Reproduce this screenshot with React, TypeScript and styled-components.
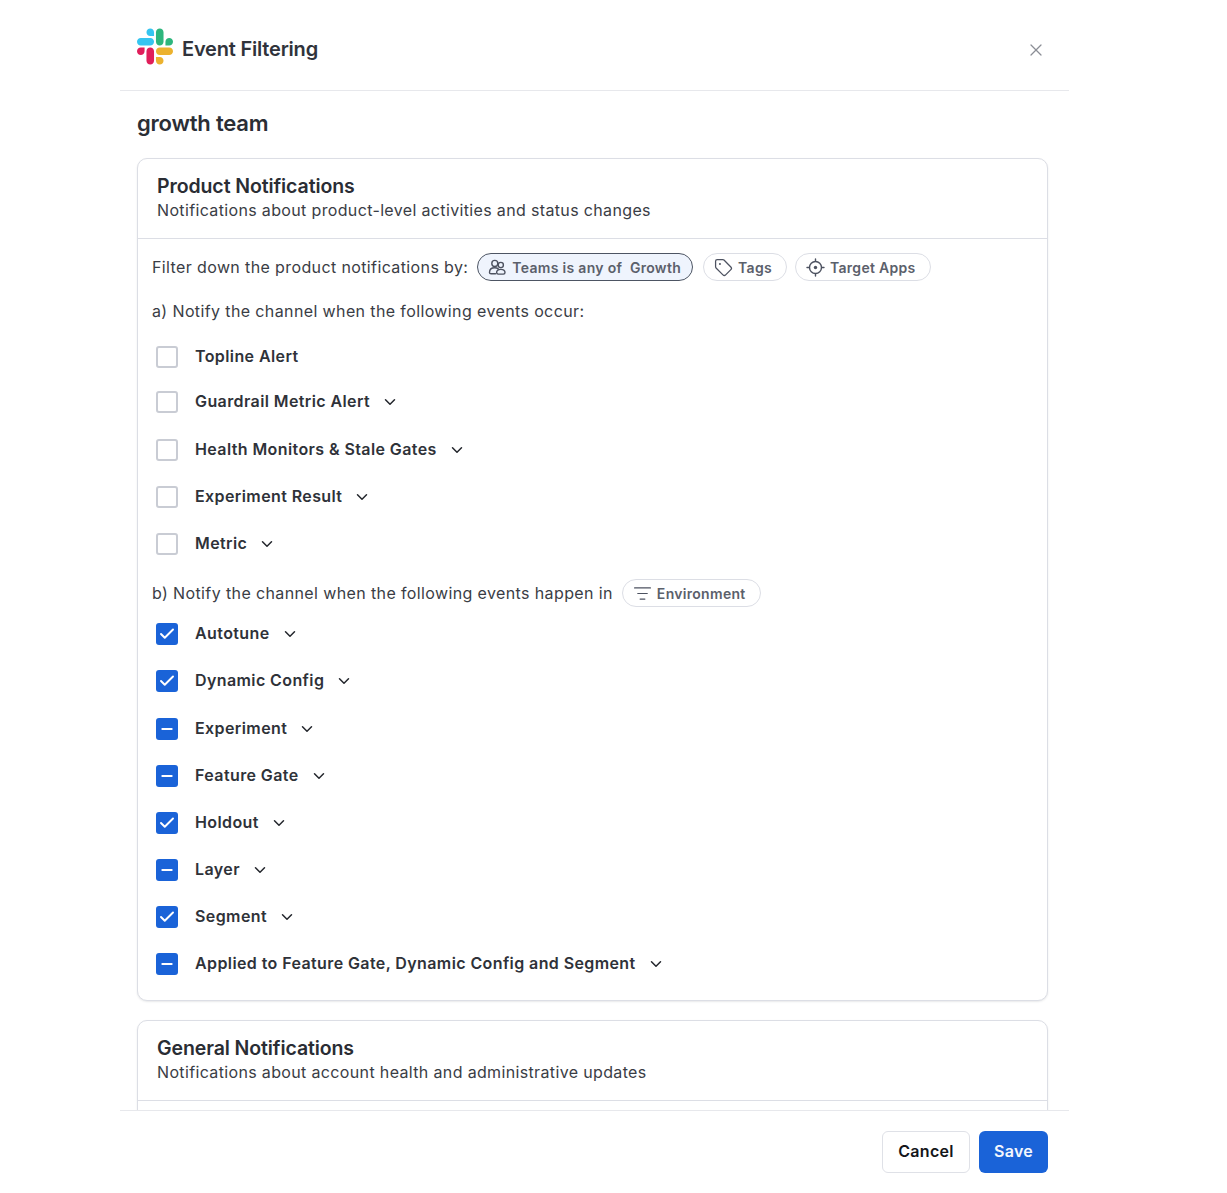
import React from "react";
import styled, { createGlobalStyle } from "styled-components";
import { Check, ChevronDown, ListFilter, Minus, Tag, X } from "lucide-react";

const GlobalStyle = createGlobalStyle`
  html, body {
    margin: 0;
    padding: 0;
    background: #fff;
    font-family: Inter, "Liberation Sans", sans-serif;
    color: #2a2d34;
  }
`;

type CheckState = "empty" | "checked" | "partial";

interface IRow {
  label: string;
  state: CheckState;
  hasChevron?: boolean;
  height: number;
}

const productRows: IRow[] = [
  { label: "Topline Alert", state: "empty", height: 43 },
  { label: "Guardrail Metric Alert", state: "empty", hasChevron: true, height: 48 },
  { label: "Health Monitors & Stale Gates", state: "empty", hasChevron: true, height: 47 },
  { label: "Experiment Result", state: "empty", hasChevron: true, height: 47 },
  { label: "Metric", state: "empty", hasChevron: true, height: 47 },
];

const environmentRows: IRow[] = [
  { label: "Autotune", state: "checked", hasChevron: true, height: 47 },
  { label: "Dynamic Config", state: "checked", hasChevron: true, height: 48 },
  { label: "Experiment", state: "partial", hasChevron: true, height: 47 },
  { label: "Feature Gate", state: "partial", hasChevron: true, height: 47 },
  { label: "Holdout", state: "checked", hasChevron: true, height: 47 },
  { label: "Layer", state: "partial", hasChevron: true, height: 47 },
  { label: "Segment", state: "checked", hasChevron: true, height: 47 },
  { label: "Applied to Feature Gate, Dynamic Config and Segment", state: "partial", hasChevron: true, height: 47 },
];

const SlackLogo = () => (
  <svg width="36" height="37" viewBox="0 0 122.8 122.8">
    <path fill="#E01E5A" d="M25.8 77.6c0 7.1-5.8 12.9-12.9 12.9S0 84.7 0 77.6s5.8-12.9 12.9-12.9h12.9v12.9zM32.3 77.6c0-7.1 5.8-12.9 12.9-12.9s12.9 5.8 12.9 12.9v32.3c0 7.1-5.8 12.9-12.9 12.9s-12.9-5.8-12.9-12.9V77.6z" />
    <path fill="#36C5F0" d="M45.2 25.8c-7.1 0-12.9-5.8-12.9-12.9S38.1 0 45.2 0s12.9 5.8 12.9 12.9v12.9H45.2zM45.2 32.3c7.1 0 12.9 5.8 12.9 12.9s-5.8 12.9-12.9 12.9H12.9C5.8 58.1 0 52.3 0 45.2s5.8-12.9 12.9-12.9h32.3z" />
    <path fill="#2EB67D" d="M97 45.2c0-7.1 5.8-12.9 12.9-12.9s12.9 5.8 12.9 12.9-5.8 12.9-12.9 12.9H97V45.2zM90.5 45.2c0 7.1-5.8 12.9-12.9 12.9s-12.9-5.8-12.9-12.9V12.9C64.7 5.8 70.5 0 77.6 0s12.9 5.8 12.9 12.9v32.3z" />
    <path fill="#ECB22E" d="M77.6 97c7.1 0 12.9 5.8 12.9 12.9s-5.8 12.9-12.9 12.9-12.9-5.8-12.9-12.9V97h12.9zM77.6 90.5c-7.1 0-12.9-5.8-12.9-12.9s5.8-12.9 12.9-12.9h32.3c7.1 0 12.9 5.8 12.9 12.9s-5.8 12.9-12.9 12.9H77.6z" />
  </svg>
);

const TeamsIcon = () => (
  <svg width="19" height="19" viewBox="0 0 19 19" fill="none" stroke="currentColor" strokeWidth="1.4">
    <circle cx="6.8" cy="5.4" r="3" />
    <circle cx="12.8" cy="7" r="2.6" />
    <path d="M1.5 14.4c0-3 2.3-4.6 5.3-4.6 1.4 0 2.6.4 3.4 1.1M1.5 14.4c0 1 .7 1.4 1.6 1.4h4.4" strokeLinecap="round" />
    <path d="M8.6 14.6c0-2 1.8-3.2 4.2-3.2s4.2 1.2 4.2 3.2c0 1-.7 1.5-1.6 1.5h-5.2c-.9 0-1.6-.5-1.6-1.5z" />
  </svg>
);

const TargetIcon = () => (
  <svg width="19" height="19" viewBox="0 0 19 19" fill="none" stroke="currentColor" strokeWidth="1.4" strokeLinecap="round">
    <circle cx="9.5" cy="9.5" r="6" />
    <circle cx="9.5" cy="9.5" r="1.7" fill="currentColor" stroke="none" />
    <path d="M9.5 1v2.4M9.5 15.6V18M1 9.5h2.4M15.6 9.5H18" />
  </svg>
);

const EventRow: React.FC<IRow> = ({ label, state, hasChevron, height }) => (
  <Row $height={height}>
    <CheckBox $state={state}>
      {state === "checked" && <Check size={18} strokeWidth={2.6} color="#fff" />}
      {state === "partial" && <Minus size={16} strokeWidth={3} color="#fff" />}
    </CheckBox>
    <RowLabel>{label}</RowLabel>
    {hasChevron && <ChevronDown size={18} strokeWidth={2} color="#23262c" />}
  </Row>
);

const App: React.FC = () => (
  <>
    <GlobalStyle />
    <Modal>
      <Header>
        <TitleGroup>
          <SlackLogo />
          <Title>Event Filtering</Title>
        </TitleGroup>
        <CloseButton>
          <X size={20} strokeWidth={1.5} />
        </CloseButton>
      </Header>

      <Content>
        <TeamName>growth team</TeamName>

        <Card>
          <CardHeader>
            <CardTitle>Product Notifications</CardTitle>
            <CardText>Notifications about product-level activities and status changes</CardText>
          </CardHeader>
          <CardBody>
            <FilterLine>
              <LineText>Filter down the product notifications by:</LineText>
              <Chips>
                <Chip $active>
                  <TeamsIcon />
                  <span>Teams is any of&nbsp; Growth</span>
                </Chip>
                <Chip>
                  <Tag size={19} strokeWidth={1.6} />
                  <span>Tags</span>
                </Chip>
                <Chip>
                  <TargetIcon />
                  <span>Target Apps</span>
                </Chip>
              </Chips>
            </FilterLine>
            <SubHeading>a) Notify the channel when the following events occur:</SubHeading>
            <RowList>
              {productRows.map((row) => (
                <EventRow key={row.label} {...row} />
              ))}
            </RowList>
            <EnvironmentLine>
              <LineText>b) Notify the channel when the following events happen in</LineText>
              <Chip>
                <ListFilter size={19} strokeWidth={1.5} />
                <span>Environment</span>
              </Chip>
            </EnvironmentLine>
            <EnvironmentList>
              {environmentRows.map((row) => (
                <EventRow key={row.label} {...row} />
              ))}
            </EnvironmentList>
          </CardBody>
        </Card>

        <Card>
          <CardHeader>
            <CardTitle>General Notifications</CardTitle>
            <CardText>Notifications about account health and administrative updates</CardText>
          </CardHeader>
          <CardBody />
        </Card>
      </Content>

      <Footer>
        <CancelButton>Cancel</CancelButton>
        <SaveButton>Save</SaveButton>
      </Footer>
    </Modal>
  </>
);

const Modal = styled.div`
  width: 949px;
  height: 1193px;
  margin-left: 120px;
  display: flex;
  flex-direction: column;
  overflow: hidden;
  background: #fff;
`;

const Header = styled.header`
  flex: none;
  height: 90px;
  box-sizing: content-box;
  border-bottom: 1px solid #e7e8ec;
  padding: 0 23px 0 17px;
  display: flex;
  align-items: center;
  justify-content: space-between;
`;

const TitleGroup = styled.div`
  display: flex;
  align-items: center;
  gap: 9px;
  margin-top: 3px;
`;

const Title = styled.h1`
  margin: 4px 0 0;
  font-size: 20px;
  line-height: 28px;
  font-weight: 600;
  letter-spacing: -0.2px;
  color: #30333b;
`;

const CloseButton = styled.div`
  display: flex;
  margin-top: 10px;
  color: #8b8e96;
`;

const Content = styled.main`
  flex: 1;
  min-height: 0;
  overflow: hidden;
  padding: 0 21px 0 17px;
  display: flex;
  flex-direction: column;
  align-items: stretch;
`;

const TeamName = styled.h2`
  margin: 17px 0 20px;
  font-size: 22px;
  line-height: 30px;
  font-weight: 600;
  letter-spacing: -0.2px;
  color: #2b2e35;
`;

const Card = styled.section`
  flex: none;
  margin-bottom: 19px;
  border: 1px solid #dcdee5;
  border-radius: 10px;
  box-shadow: 0 1px 2px rgba(30, 35, 50, 0.1);
  background: #fff;
`;

const CardHeader = styled.div`
  height: 80px;
  box-sizing: border-box;
  padding: 15px 19px 0;
  border-bottom: 1px solid #dcdee5;
`;

const CardTitle = styled.h3`
  margin: 0;
  font-size: 19.5px;
  line-height: 25px;
  font-weight: 600;
  letter-spacing: -0.1px;
  color: #2a2d34;
`;

const CardText = styled.p`
  margin: 0;
  font-size: 16px;
  line-height: 23px;
  letter-spacing: 0.35px;
  color: #3a3d45;
`;

const CardBody = styled.div`
  padding: 14px 14px 13px;
  min-height: 20px;
`;

const FilterLine = styled.div`
  display: flex;
  align-items: center;
  gap: 9px;
  height: 28px;
`;

const LineText = styled.span`
  font-size: 16px;
  line-height: 24px;
  letter-spacing: 0.38px;
  color: #3a3d45;
`;

const Chips = styled.div`
  display: flex;
  gap: 8px;
`;

const Chip = styled.div<{ $active?: boolean }>`
  height: 28px;
  box-sizing: border-box;
  padding: 0 ${({ $active }) => ($active ? "11px" : "14px")} 0 10px;
  margin-right: ${({ $active }) => ($active ? "2px" : "0")};
  display: flex;
  align-items: center;
  gap: 5px;
  border-radius: 14px;
  border: 1px solid ${({ $active }) => ($active ? "#4d5563" : "#dcdee5")};
  background: ${({ $active }) => ($active ? "#eff4fd" : "#fff")};
  color: #5b606b;
  font-size: 14px;
  font-weight: 600;
  letter-spacing: 0.3px;
  white-space: nowrap;

  svg {
    flex: none;
    color: #4d5260;
  }
`;

const SubHeading = styled.p`
  margin: 18px 0 12px;
  font-size: 16px;
  line-height: 24px;
  letter-spacing: 0.38px;
  color: #3a3d45;
`;

const RowList = styled.div`
  display: flex;
  flex-direction: column;
`;

const EnvironmentList = styled(RowList)`
  margin-top: 3px;
`;

const EnvironmentLine = styled.div`
  display: flex;
  align-items: center;
  gap: 9px;
  height: 28px;
  margin-top: 12px;
  margin-bottom: 2px;
`;

const Row = styled.div<{ $height: number }>`
  height: ${({ $height }) => $height}px;
  padding-left: 4px;
  display: flex;
  align-items: center;
  gap: 9px;
`;

const CheckBox = styled.span<{ $state: CheckState }>`
  flex: none;
  width: 22px;
  height: 22px;
  box-sizing: border-box;
  margin-right: 8px;
  border-radius: 3px;
  display: flex;
  align-items: center;
  justify-content: center;
  background: ${({ $state }) => ($state === "empty" ? "#fff" : "#1a63d8")};
  border: ${({ $state }) => ($state === "empty" ? "2px solid #c9ccd4" : "none")};
`;

const RowLabel = styled.span`
  font-size: 16px;
  line-height: 24px;
  font-weight: 600;
  letter-spacing: 0.4px;
  color: #2f3239;
  margin-right: 2px;
  position: relative;
  top: -1px;
`;

const Footer = styled.footer`
  flex: none;
  height: 83px;
  box-sizing: border-box;
  border-top: 1px solid #e7e8ec;
  padding: 20px 21px 0 0;
  display: flex;
  justify-content: flex-end;
  align-items: flex-start;
  gap: 9px;
  background: #fff;
`;

const CancelButton = styled.button`
  width: 88px;
  height: 42px;
  padding: 0 0 2px;
  border: 1px solid #dfe1e7;
  border-radius: 6px;
  background: #fff;
  color: #14161a;
  font-family: inherit;
  font-size: 16px;
  font-weight: 600;
  letter-spacing: 0.3px;
`;

const SaveButton = styled.button`
  width: 69px;
  height: 42px;
  padding: 0 0 2px;
  border: none;
  border-radius: 6px;
  background: #1a63d8;
  color: #f4f7fd;
  font-family: inherit;
  font-size: 16px;
  font-weight: 600;
  letter-spacing: 0.3px;
`;

export default App;
